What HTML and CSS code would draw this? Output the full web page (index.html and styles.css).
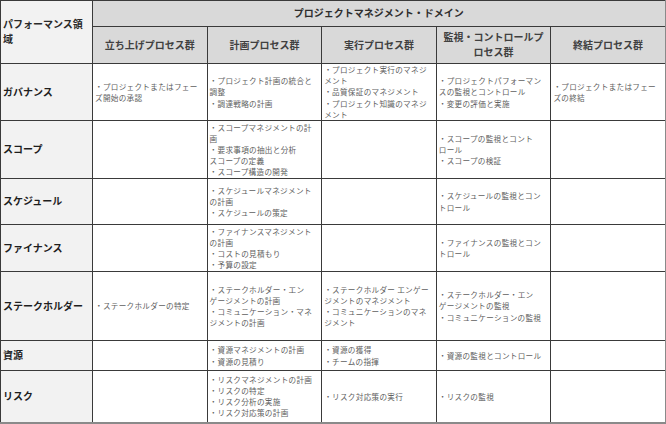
FILE: index.html
```html
<!DOCTYPE html>
<html lang="ja">
<head>
<meta charset="utf-8">
<link rel="stylesheet" href="styles.css">
</head>
<body>
<table class="grid">
  <colgroup>
    <col class="c-area">
    <col class="c-proc"><col class="c-proc"><col class="c-proc"><col class="c-proc"><col class="c-proc">
  </colgroup>
  <tr class="r-h1">
    <th class="area-head" rowspan="2">パフォーマンス領<br>域</th>
    <th class="domain" colspan="5">プロジェクトマネジメント・ドメイン</th>
  </tr>
  <tr class="r-h2">
    <th class="proc">立ち上げプロセス群</th>
    <th class="proc">計画プロセス群</th>
    <th class="proc">実行プロセス群</th>
    <th class="proc">監視・コントロールプ<br>ロセス群</th>
    <th class="proc">終結プロセス群</th>
  </tr>
  <tr class="r-gov">
    <th class="area">ガバナンス</th>
    <td>・プロジェクトまたはフェー<br>ズ開始の承認</td>
    <td>・プロジェクト計画の統合と<br>調整<br>・調達戦略の計画</td>
    <td>・プロジェクト実行のマネジ<br>メント<br>・品質保証のマネジメント<br>・プロジェクト知識のマネジ<br>メント</td>
    <td>・プロジェクトパフォーマン<br>スの監視とコントロール<br>・変更の評価と実施</td>
    <td>・プロジェクトまたはフェー<br>ズの終結</td>
  </tr>
  <tr class="r-scope">
    <th class="area">スコープ</th>
    <td></td>
    <td>・スコープマネジメントの計<br>画<br>・要求事項の抽出と分析<br>スコープの定義<br>・スコープ構造の開発</td>
    <td></td>
    <td>・スコープの監視とコント<br>ロール<br>・スコープの検証</td>
    <td></td>
  </tr>
  <tr class="r-sched">
    <th class="area">スケジュール</th>
    <td></td>
    <td>・スケジュールマネジメント<br>の計画<br>・スケジュールの策定</td>
    <td></td>
    <td>・スケジュールの監視とコン<br>トロール</td>
    <td></td>
  </tr>
  <tr class="r-fin">
    <th class="area">ファイナンス</th>
    <td></td>
    <td>・ファイナンスマネジメント<br>の計画<br>・コストの見積もり<br>・予算の設定</td>
    <td></td>
    <td>・ファイナンスの監視とコン<br>トロール</td>
    <td></td>
  </tr>
  <tr class="r-stake">
    <th class="area">ステークホルダー</th>
    <td>・ステークホルダーの特定</td>
    <td>・ステークホルダー・エン<br>ゲージメントの計画<br>・コミュニケーション・マネ<br>ジメントの計画</td>
    <td>・ステークホルダー エンゲー<br>ジメントのマネジメント<br>・コミュニケーションのマネ<br>ジメント</td>
    <td>・ステークホルダー・エン<br>ゲージメントの監視<br>・コミュニケーションの監視</td>
    <td></td>
  </tr>
  <tr class="r-res">
    <th class="area">資源</th>
    <td></td>
    <td>・資源マネジメントの計画<br>・資源の見積り</td>
    <td>・資源の獲得<br>・チームの指揮</td>
    <td>・資源の監視とコントロール</td>
    <td></td>
  </tr>
  <tr class="r-risk">
    <th class="area">リスク</th>
    <td></td>
    <td>・リスクマネジメントの計画<br>・リスクの特定<br>・リスク分析の実施<br>・リスク対応策の計画</td>
    <td>・リスク対応策の実行</td>
    <td>・リスクの監視</td>
    <td></td>
  </tr>
</table>
</body>
</html>
```

FILE: styles.css
```css
html, body {
  margin: 0;
  padding: 0;
  background: #ffffff;
}

body {
  font-family: "Noto Sans CJK JP", "Noto Sans", sans-serif;
}

.grid {
  width: 665px;
  border-collapse: collapse;
  table-layout: fixed;
  border-top: 1px solid #555;
  border-left: 1px solid #555;
  border-right: 2px solid #8a8a8a;
  border-bottom: 2px solid #8a8a8a;
}

.c-area { width: 92px; }
.c-proc { width: 114.6px; }

.grid th,
.grid td {
  border: 1px solid #3a3a3a;
  padding: 0 2px;
  vertical-align: middle;
}

.grid td {
  font-size: 7.6px;
  line-height: 11.1px;
  letter-spacing: 0.3px;
  color: #606060;
  text-align: left;
  white-space: nowrap;
  background: #ffffff;
}

.area-head {
  background: #f2f2f2;
  color: #2a2a2a;
  font-size: 10px;
  line-height: 14.6px;
  font-weight: 700;
  text-align: left;
  padding-left: 6px;
}

.domain {
  background: #d9d9d9;
  color: #2e2e2e;
  font-size: 10px;
  line-height: 14.6px;
  font-weight: 700;
  text-align: center;
}

.proc {
  background: #d9d9d9;
  color: #404040;
  font-size: 10px;
  line-height: 14.6px;
  font-weight: 700;
  text-align: center;
}

.area {
  background: #f2f2f2;
  color: #1e1e1e;
  font-size: 10px;
  line-height: 14.6px;
  font-weight: 700;
  text-align: left;
  padding-left: 6px;
}

.r-h1 { height: 26px; }
.r-h2 { height: 37px; }
.r-gov { height: 57px; }
.r-scope { height: 58px; }
.r-sched { height: 46px; }
.r-fin { height: 47px; }
.r-stake { height: 69px; }
.r-res { height: 30px; }
.r-risk { height: 52px; }
```
